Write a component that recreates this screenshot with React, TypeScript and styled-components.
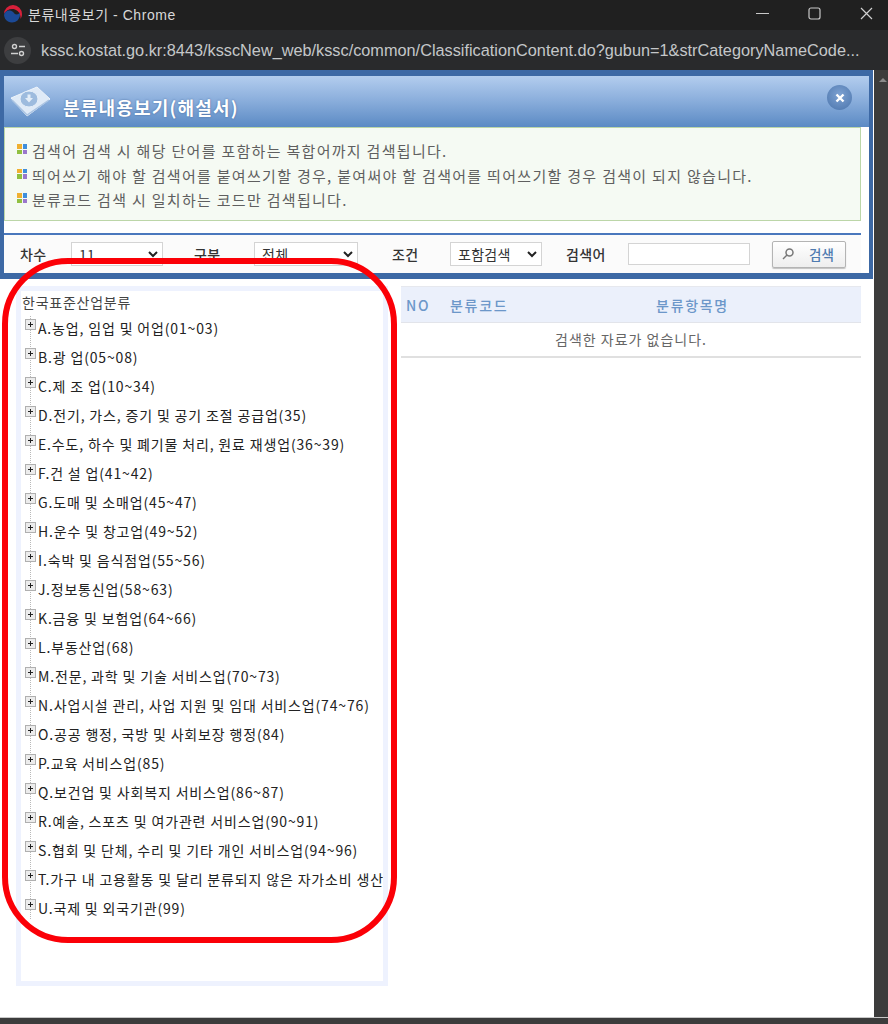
import React from 'react';
import styled, { createGlobalStyle } from 'styled-components';

const GlobalStyle = createGlobalStyle`
    html, body {
        margin: 0;
        padding: 0;
        background: #fff;
    }
    body {
        font-family: "Noto Sans CJK KR", "Liberation Sans", sans-serif;
    }
`;

const kr = `"Noto Sans CJK KR", sans-serif`;
const latin = `"Liberation Sans", "Noto Sans CJK KR", sans-serif`;

const Window = styled.div`
    position: relative;
    width: 888px;
    height: 1024px;
    overflow: hidden;
    display: flex;
    flex-direction: column;
    background: #fff;
`;

const TitleBar = styled.div`
    height: 30px;
    flex: none;
    box-sizing: border-box;
    padding: 0 0 3px 3px;
    background: #202020;
    display: flex;
    align-items: center;
    color: #d8d8d8;
    font-size: 14px;
    letter-spacing: 0.55px;
    font-family: ${latin};
`;

const TitleText = styled.span`
    margin-left: 5px;
    flex: 1;
`;

const WinButtons = styled.div`
    display: flex;
    align-items: center;
    gap: 39px;
    padding-right: 15px;
    svg { display: block; }
`;

const AddressBar = styled.div`
    height: 40px;
    flex: none;
    background: #292a2c;
    display: flex;
    align-items: center;
    padding-left: 4px;
    color: #c4c7c9;
    font-size: 16.3px;
    font-family: "Liberation Sans", sans-serif;
`;

const SiteButton = styled.div`
    width: 27px;
    height: 27px;
    border-radius: 50%;
    background: #3d3e40;
    display: flex;
    align-items: center;
    justify-content: center;
    margin-right: 10px;
`;

const Page = styled.div`
    flex: 1;
    display: flex;
    min-height: 0;
`;

const Main = styled.div`
    flex: 1;
    min-width: 0;
    display: flex;
    flex-direction: column;
`;

const ScrollTrack = styled.div`
    width: 14px;
    flex: none;
    margin-left: 1px;
    background: #3c3c3c;
    display: flex;
    justify-content: center;
    padding: 8px 0 0 4px;
    box-sizing: border-box;
`;

const ScrollArrow = styled.div`
    width: 0;
    height: 0;
    border-left: 4px solid transparent;
    border-right: 4px solid transparent;
    border-bottom: 4px solid #8a8a8a;
`;

const BottomBar = styled.div`
    height: 7px;
    flex: none;
    background: #3c3c3c;
    border-top: 1px solid #c8c8c8;
    box-sizing: border-box;
`;

const Modal = styled.div`
    background: #3d69a5;
    padding: 6px 4px 6px 4px;
    flex: none;
`;

const ModalHeader = styled.div`
    height: 51px;
    background: linear-gradient(#b3cdee, #8db0dd 45%, #5b8ac4);
    display: flex;
    align-items: center;
    padding: 0 0 0 6px;
`;

const ModalTitle = styled.h1`
    margin: 10px 0 0 11px;
    flex: 1;
    font-size: 18px;
    font-weight: 700;
    letter-spacing: 1.2px;
    color: #fff;
    font-family: ${kr};
    text-shadow: 0 0 2px #45699c;
`;

const CloseRound = styled.div`
    width: 25px;
    height: 25px;
    border-radius: 50%;
    background: radial-gradient(circle at 50% 40%, #7ea2d2, #4a74ac);
    margin: 0 17px 8px 0;
    display: flex;
    align-items: center;
    justify-content: center;
`;

const ModalBody = styled.div`
    background: #fff;
`;

const Notice = styled.div`
    width: 857px;
    height: 94px;
    box-sizing: border-box;
    border: 1px solid #bcd6a8;
    background: #f5faf3;
    padding: 13px 0 0 12px;
    display: flex;
    flex-direction: column;
    gap: 5.5px;
`;

const NoticeLine = styled.div`
    display: flex;
    align-items: center;
    height: 19px;
    font-size: 15px;
    letter-spacing: 1.3px;
    color: #5f5f5f;
    font-family: ${kr};
    white-space: nowrap;
`;

const Bullet = styled.span`
    width: 10px;
    height: 10px;
    flex: none;
    margin: -3px 5px 0 0;
    display: grid;
    grid-template-columns: 1fr 1fr;
    grid-template-rows: 1fr 1fr;
    gap: 1px;
    i:nth-child(1) { background: #f0b030; }
    i:nth-child(2) { background: #3f8fdc; }
    i:nth-child(3) { background: #90c040; }
    i:nth-child(4) { background: #9a78cc; }
`;

const SearchWrap = styled.div`
    margin-top: 12px;
    padding-right: 8px;
`;

const SearchBar = styled.div`
    height: 40px;
    box-sizing: border-box;
    border-top: 2px solid #4a78bd;
    background: #fbfbfb;
    display: flex;
    align-items: center;
    font-size: 14px;
    font-family: ${kr};
    color: #333;
`;

const Label = styled.span<{ $w: number; $pad: number }>`
    width: ${p => p.$w}px;
    padding-left: ${p => p.$pad}px;
    box-sizing: border-box;
    flex: none;
    font-weight: 500;
    letter-spacing: 0.4px;
    white-space: nowrap;
`;

const FakeSelect = styled.div<{ $w: number }>`
    width: ${p => p.$w}px;
    height: 24px;
    flex: none;
    box-sizing: border-box;
    border: 1px solid #d4d4d4;
    background: #fff;
    display: flex;
    align-items: center;
    justify-content: space-between;
    padding: 0 3px 0 7px;
    font-size: 14px;
    letter-spacing: 0.3px;
    color: #333;
    white-space: nowrap;
`;

const TextBox = styled.div`
    width: 122px;
    height: 22px;
    flex: none;
    box-sizing: border-box;
    border: 1px solid #d4d4d4;
    background: #fff;
`;

const SearchButton = styled.button`
    width: 74px;
    height: 27px;
    margin-left: 22px;
    padding: 0 0 0 8px;
    box-sizing: border-box;
    border: 1px solid #b4b4b4;
    border-radius: 2px;
    background: linear-gradient(#fff, #eeeeee);
    box-shadow: 0 1px 1px #c0c0c0;
    display: flex;
    align-items: center;
    gap: 14px;
    color: #4f7bb0;
    font-size: 13.5px;
    font-weight: 500;
    font-family: ${kr};
`;

const Content = styled.div`
    flex: 1;
    display: flex;
    align-items: flex-start;
    padding: 7px 12px 0 16px;
    gap: 13px;
`;

const TreePanel = styled.div`
    width: 372px;
    height: 700px;
    flex: none;
    box-sizing: border-box;
    border: 5px solid #eef2fe;
    padding: 1px 0 0 1px;
    overflow: hidden;
`;

const TreeRoot = styled.div`
    font-size: 14px;
    line-height: 20px;
    height: 20px;
    color: #444;
    font-family: ${kr};
    letter-spacing: 0.75px;
`;

const TreeList = styled.ul`
    list-style: none;
    margin: 4px 0 0;
    padding: 0;
    background-image: linear-gradient(#b9b9b9 50%, transparent 50%);
    background-size: 1px 2px;
    background-repeat: repeat-y;
    background-position: 8px 0;
`;

const TreeRow = styled.li`
    height: 29px;
    display: flex;
    align-items: flex-start;
    padding-left: 3px;
    white-space: nowrap;
    overflow: hidden;
    &:last-child { height: 24px; }
`;

const PlusBox = styled.span`
    width: 11px;
    height: 11px;
    flex: none;
    margin-top: 3px;
    box-sizing: border-box;
    border: 1px solid #b0b0b0;
    background: #ececec;
    position: relative;
    &::before {
        content: '';
        position: absolute;
        left: 2px;
        top: 4px;
        width: 5px;
        height: 1px;
        background: #222;
    }
    &::after {
        content: '';
        position: absolute;
        left: 4px;
        top: 2px;
        width: 1px;
        height: 5px;
        background: #222;
    }
`;

const RowText = styled.span`
    margin-left: 2px;
    font-size: 14px;
    line-height: 24px;
    letter-spacing: 0.84px;
    color: #222;
    font-family: ${kr};
`;

const ResultArea = styled.div`
    flex: 1;
    min-width: 0;
`;

const ResultHead = styled.div`
    height: 37px;
    box-sizing: border-box;
    border-top: 1px solid #e6e8ee;
    border-bottom: 1px solid #e2e4ea;
    background: #ebf0fb;
    display: grid;
    grid-template-columns: 49px 74px 1fr;
    align-items: center;
    color: #6c97c9;
    font-size: 14px;
    font-weight: 500;
    font-family: ${kr};
    letter-spacing: 1.7px;
`;

const HeadCell = styled.span<{ $center?: boolean; $pad?: number }>`
    text-align: ${p => (p.$center ? 'center' : 'left')};
    padding-left: ${p => p.$pad || 0}px;
`;

const EmptyRow = styled.div`
    height: 35px;
    box-sizing: border-box;
    border-bottom: 2px solid #e0e0e0;
    display: flex;
    align-items: center;
    justify-content: center;
    padding-bottom: 2px;
    color: #666;
    font-size: 14px;
    letter-spacing: 1px;
    font-family: ${kr};
`;

const RedRing = styled.div`
    position: absolute;
    left: 2px;
    top: 258px;
    width: 395px;
    height: 685px;
    box-sizing: border-box;
    border: 6px solid #fb0007;
    border-radius: 66px;
    pointer-events: none;
`;

const notices = [
    '검색어 검색 시 해당 단어를 포함하는 복합어까지 검색됩니다.',
    '띄어쓰기 해야 할 검색어를 붙여쓰기할 경우, 붙여써야 할 검색어를 띄어쓰기할 경우 검색이 되지 않습니다.',
    '분류코드 검색 시 일치하는 코드만 검색됩니다.',
];

const treeItems = [
    'A.농업, 임업 및 어업(01~03)',
    'B.광 업(05~08)',
    'C.제 조 업(10~34)',
    'D.전기, 가스, 증기 및 공기 조절 공급업(35)',
    'E.수도, 하수 및 폐기물 처리, 원료 재생업(36~39)',
    'F.건 설 업(41~42)',
    'G.도매 및 소매업(45~47)',
    'H.운수 및 창고업(49~52)',
    'I.숙박 및 음식점업(55~56)',
    'J.정보통신업(58~63)',
    'K.금융 및 보험업(64~66)',
    'L.부동산업(68)',
    'M.전문, 과학 및 기술 서비스업(70~73)',
    'N.사업시설 관리, 사업 지원 및 임대 서비스업(74~76)',
    'O.공공 행정, 국방 및 사회보장 행정(84)',
    'P.교육 서비스업(85)',
    'Q.보건업 및 사회복지 서비스업(86~87)',
    'R.예술, 스포츠 및 여가관련 서비스업(90~91)',
    'S.협회 및 단체, 수리 및 기타 개인 서비스업(94~96)',
    'T.가구 내 고용활동 및 달리 분류되지 않은 자가소비 생산',
    'U.국제 및 외국기관(99)',
];

const Chevron = () => (
    <svg width="12" height="12" viewBox="0 0 12 12">
        <path d="M2 4l4 4 4-4" fill="none" stroke="#222" strokeWidth="2" />
    </svg>
);

const Taegeuk = () => (
    <svg width="20" height="20" viewBox="0 0 20 20">
        <path d="M1 10A9 9 0 0 1 19 10C19 12 18.400 13.500 17.500 15C18 11 16 7 12 5.500C8 4 3 6 1 10z" fill="#d8203a" />
        <path d="M1 11C1.500 7.500 5 5.800 8 6.800C11 7.800 11 10.500 13.500 10.500C15.500 10.500 16.500 9.500 16.800 8C17.500 11 16.800 14 14.500 16.500C12 18.800 8 19 5 17.500C2.500 16 1.200 13.500 1 11z" fill="#1c4a96" />
    </svg>
);

const BookIcon = () => (
    <svg width="42" height="34" viewBox="0 0 42 34">
        <path d="M1 13L27 2l13 12-23 17z" fill="#dfeaf7" stroke="#eef4fb" strokeWidth="1" />
        <path d="M2 15l15 15 22-15" fill="none" stroke="#a9c3e2" strokeWidth="1.500" />
        <ellipse cx="19" cy="14" rx="9" ry="8" fill="#9dbbde" stroke="#e6eff9" strokeWidth="1" />
        <path d="M17.500 9.500h3v3.500h2.500l-4 4.500-4-4.500h2.500z" fill="#e3edf8" />
    </svg>
);

const App: React.FC = () => {
    return (
        <Window>
            <GlobalStyle />
            <TitleBar>
                <Taegeuk />
                <TitleText>분류내용보기 - Chrome</TitleText>
                <WinButtons>
                    <svg width="13" height="13" viewBox="0 0 13 13">
                        <path d="M0 6.500h13" stroke="#c8c8c8" strokeWidth="1" />
                    </svg>
                    <svg width="13" height="13" viewBox="0 0 13 13">
                        <rect x="1" y="1" width="11" height="11" rx="2" fill="none" stroke="#c8c8c8" strokeWidth="1.200" />
                    </svg>
                    <svg width="13" height="13" viewBox="0 0 13 13">
                        <path d="M1 1l11 11M12 1L1 12" stroke="#d0d0d0" strokeWidth="1.200" />
                    </svg>
                </WinButtons>
            </TitleBar>
            <AddressBar>
                <SiteButton>
                    <svg width="16" height="16" viewBox="0 0 16 16" fill="none" stroke="#d0d0d0" strokeWidth="1.400">
                        <circle cx="4.500" cy="4.500" r="2" />
                        <path d="M9 4.500h6M1 11.500h7" />
                        <circle cx="11.500" cy="11.500" r="2" />
                    </svg>
                </SiteButton>
                kssc.kostat.go.kr:8443/ksscNew_web/kssc/common/ClassificationContent.do?gubun=1&amp;strCategoryNameCode...
            </AddressBar>
            <Page>
                <Main>
                    <Modal>
                        <ModalHeader>
                            <BookIcon />
                            <ModalTitle>분류내용보기(해설서)</ModalTitle>
                            <CloseRound>
                                <svg width="12" height="12" viewBox="0 0 12 12">
                                    <path d="M2.500 2.500l7 7M9.500 2.500l-7 7" stroke="#fff" strokeWidth="2.400" />
                                </svg>
                            </CloseRound>
                        </ModalHeader>
                        <ModalBody>
                            <Notice>
                                {notices.map(text => (
                                    <NoticeLine key={text}>
                                        <Bullet><i /><i /><i /><i /></Bullet>
                                        {text}
                                    </NoticeLine>
                                ))}
                            </Notice>
                            <SearchWrap>
                                <SearchBar>
                                    <Label $w={67} $pad={16}>차수</Label>
                                    <FakeSelect $w={92}>11<Chevron /></FakeSelect>
                                    <Label $w={91} $pad={31}>구분</Label>
                                    <FakeSelect $w={104}>전체<Chevron /></FakeSelect>
                                    <Label $w={92} $pad={34}>조건</Label>
                                    <FakeSelect $w={92}>포함검색<Chevron /></FakeSelect>
                                    <Label $w={86} $pad={24}>검색어</Label>
                                    <TextBox />
                                    <SearchButton>
                                        <svg width="14" height="14" viewBox="0 0 14 14" fill="none" stroke="#777" strokeWidth="1.500">
                                            <circle cx="8.500" cy="5.500" r="3.500" />
                                            <path d="M6 8l-4 4" />
                                        </svg>
                                        검색
                                    </SearchButton>
                                </SearchBar>
                            </SearchWrap>
                        </ModalBody>
                    </Modal>
                    <Content>
                        <TreePanel>
                            <TreeRoot>한국표준산업분류</TreeRoot>
                            <TreeList>
                                {treeItems.map(item => (
                                    <TreeRow key={item}>
                                        <PlusBox />
                                        <RowText>{item}</RowText>
                                    </TreeRow>
                                ))}
                            </TreeList>
                        </TreePanel>
                        <ResultArea>
                            <ResultHead>
                                <HeadCell $pad={5}>NO</HeadCell>
                                <HeadCell>분류코드</HeadCell>
                                <HeadCell $center>분류항목명</HeadCell>
                            </ResultHead>
                            <EmptyRow>검색한 자료가 없습니다.</EmptyRow>
                        </ResultArea>
                    </Content>
                </Main>
                <ScrollTrack><ScrollArrow /></ScrollTrack>
            </Page>
            <BottomBar />
            <RedRing />
        </Window>
    );
};

export default App;
